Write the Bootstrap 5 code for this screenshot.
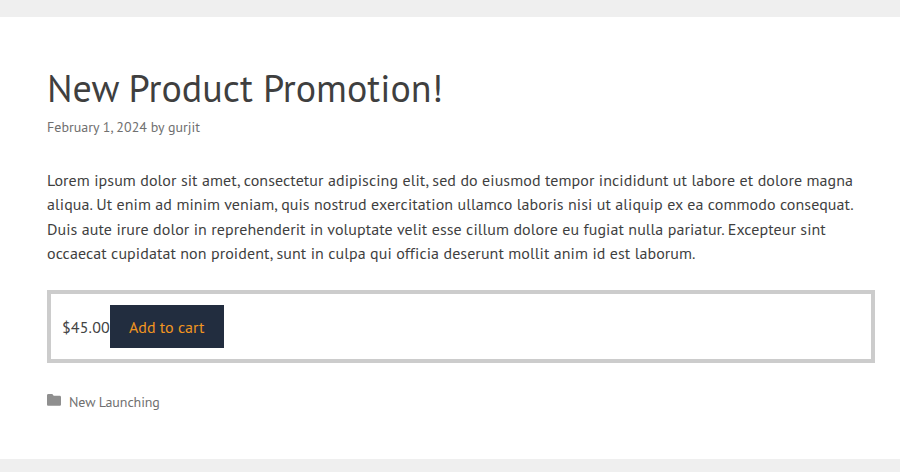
<!DOCTYPE html>
<html lang="en"><head><meta charset="utf-8"><title>New Product Promotion!</title>
<link href="https://cdn.jsdelivr.net/npm/bootstrap@5.3.0/dist/css/bootstrap.min.css" rel="stylesheet">
<style>
html,body{height:100%}
body{background:#efefef;font-family:"PT Sans","Noto Sans",sans-serif;color:#3a3a3a;overflow:hidden;padding-top:17px}
.post-box{background:#fff;height:442px;padding:48px 25px 0 47px}
.post-title{font-size:38px;line-height:46px;font-weight:400;margin:0 0 6px;color:#3f3f3f}
.post-meta{font-size:14px;line-height:20px;color:#707070;letter-spacing:.02px}
.post-text{font-size:16px;line-height:24.3px;margin:31px 0 25px;letter-spacing:.08px;color:#3f3f3f}
.buy-box{border:4px solid #ccc;height:73px;padding-left:11px;font-size:16px;color:#444}
.buy-box span{letter-spacing:.15px}
.buy-btn{background:#222d3f;color:#f1951f;border:0;border-radius:0;height:43px;padding:0 20px 0 19px;font-size:16px}
.cat-line{font-size:14px;color:#707070;margin-top:29px;gap:8px;letter-spacing:-.1px}
.cat-icon{margin-bottom:6px}
</style></head><body>
<main class="post-box">
<h1 class="post-title">New Product Promotion!</h1>
<div class="post-meta">February 1, 2024 by gurjit</div>
<p class="post-text">Lorem ipsum dolor sit amet, consectetur adipiscing elit, sed do eiusmod tempor incididunt ut labore et dolore magna aliqua. Ut enim ad minim veniam, quis nostrud exercitation ullamco laboris nisi ut aliquip ex ea commodo consequat. Duis aute irure dolor in reprehenderit in voluptate velit esse cillum dolore eu fugiat nulla pariatur. Excepteur sint occaecat cupidatat non proident, sunt in culpa qui officia deserunt mollit anim id est laborum.</p>
<div class="buy-box d-flex align-items-center"><span>$45.00</span><button class="btn buy-btn">Add to cart</button></div>
<div class="cat-line d-flex align-items-center"><svg class="cat-icon" width="14" height="12" viewBox="0 0 14 12"><path fill="#8f8f8f" d="M1.300 0h4l1.400 1.700h6c.7 0 1.300.6 1.300 1.300v7.400c0 .7-.6 1.300-1.300 1.300H1.300C.6 11.700 0 11.100 0 10.400V1.300C0 .6.600 0 1.300 0z"/></svg><span>New Launching</span></div>
</main>
<script src="https://cdn.jsdelivr.net/npm/bootstrap@5.3.0/dist/js/bootstrap.bundle.min.js"></script>
</body></html>
